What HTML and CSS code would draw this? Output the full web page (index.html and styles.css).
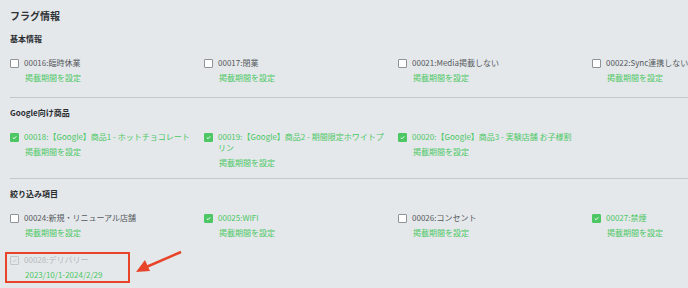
FILE: index.html
```html
<!DOCTYPE html>
<html>
  <head>
    <title>フラグ情報</title>
    <link rel="stylesheet" href="styles.css">
  </head>
  <body>
    <div class="page">
      <h1 class="title">フラグ情報</h1>

      <div class="section">
        <h2 class="section-title">基本情報</h2>
        <div class="flag-grid">
          <div class="flag">
            <span class="box"></span>
            <div class="flag-body">
              <p class="label">00016:臨時休業</p>
              <p class="period">掲載期間を設定</p>
            </div>
          </div>
          <div class="flag">
            <span class="box"></span>
            <div class="flag-body">
              <p class="label">00017:閉業</p>
              <p class="period">掲載期間を設定</p>
            </div>
          </div>
          <div class="flag">
            <span class="box"></span>
            <div class="flag-body">
              <p class="label">00021:Media掲載しない</p>
              <p class="period">掲載期間を設定</p>
            </div>
          </div>
          <div class="flag">
            <span class="box"></span>
            <div class="flag-body">
              <p class="label">00022:Sync連携しない</p>
              <p class="period">掲載期間を設定</p>
            </div>
          </div>
        </div>
      </div>

      <div class="section">
        <h2 class="section-title">Google向け商品</h2>
        <div class="flag-grid">
          <div class="flag checked">
            <span class="box"><svg viewBox="0 0 10 10"><path d="M2.6 5.2 L4.3 6.8 L7.5 3.4"/></svg></span>
            <div class="flag-body">
              <p class="label">00018:【Google】商品1 - ホットチョコレート</p>
              <p class="period">掲載期間を設定</p>
            </div>
          </div>
          <div class="flag checked">
            <span class="box"><svg viewBox="0 0 10 10"><path d="M2.6 5.2 L4.3 6.8 L7.5 3.4"/></svg></span>
            <div class="flag-body">
              <p class="label">00019:【Google】商品2 - 期間限定ホワイトプリン</p>
              <p class="period">掲載期間を設定</p>
            </div>
          </div>
          <div class="flag checked">
            <span class="box"><svg viewBox="0 0 10 10"><path d="M2.6 5.2 L4.3 6.8 L7.5 3.4"/></svg></span>
            <div class="flag-body">
              <p class="label">00020:【Google】商品3 - 実験店舗 お子様割</p>
              <p class="period">掲載期間を設定</p>
            </div>
          </div>
        </div>
      </div>

      <div class="section last">
        <h2 class="section-title">絞り込み項目</h2>
        <div class="flag-grid">
          <div class="flag">
            <span class="box"></span>
            <div class="flag-body">
              <p class="label">00024:新規・リニューアル店舗</p>
              <p class="period">掲載期間を設定</p>
            </div>
          </div>
          <div class="flag checked">
            <span class="box"><svg viewBox="0 0 10 10"><path d="M2.6 5.2 L4.3 6.8 L7.5 3.4"/></svg></span>
            <div class="flag-body">
              <p class="label">00025:WIFI</p>
              <p class="period">掲載期間を設定</p>
            </div>
          </div>
          <div class="flag">
            <span class="box"></span>
            <div class="flag-body">
              <p class="label">00026:コンセント</p>
              <p class="period">掲載期間を設定</p>
            </div>
          </div>
          <div class="flag checked">
            <span class="box"><svg viewBox="0 0 10 10"><path d="M2.6 5.2 L4.3 6.8 L7.5 3.4"/></svg></span>
            <div class="flag-body">
              <p class="label">00027:禁煙</p>
              <p class="period">掲載期間を設定</p>
            </div>
          </div>
          <div class="flag disabled marked">
            <span class="box"><svg viewBox="0 0 10 10"><path d="M2.6 5.2 L4.3 6.8 L7.5 3.4"/></svg></span>
            <div class="flag-body">
              <p class="label">00028:デリバリー</p>
              <p class="period">2023/10/1-2024/2/29</p>
            </div>
            <svg class="arrow" viewBox="0 0 50 24">
              <line x1="47" y1="1" x2="10" y2="17"/>
              <polygon points="2,21 11,9 16,20"/>
            </svg>
          </div>
        </div>
      </div>
    </div>
  </body>
</html>
```

FILE: styles.css
```css
html, body {
  margin: 0;
  height: 100%;
  overflow: hidden;
}
body {
  background-color: #e4e8eb;
  color: #333;
  font-family: "Noto Sans CJK JP", "Noto Sans", sans-serif;
}
.page {
  padding: 9px 0 0 10px;
  overflow: hidden;
  height: 279px;
}
.title {
  margin: 0;
  font-size: 10px;
  line-height: 14px;
  font-weight: bold;
  color: #2f3336;
}
.section {
  border-bottom: 1px solid #c3c8cb;
  padding-bottom: 10px;
  margin-top: 10px;
}
.section + .section {
  margin-top: 9px;
}
.section.last {
  border-bottom: none;
}
.section-title {
  margin: 0;
  font-size: 8px;
  line-height: 12px;
  font-weight: bold;
  color: #2a2d30;
}
.flag-grid {
  display: grid;
  grid-template-columns: repeat(4, 180px);
  column-gap: 14px;
  row-gap: 12px;
  margin-top: 12px;
}
.flag {
  display: flex;
  gap: 5px;
  min-height: 30px;
  position: relative;
}
.box {
  width: 7px;
  height: 7px;
  margin-top: 2px;
  flex-shrink: 0;
  background-color: white;
  border: 1px solid #8e9397;
  border-radius: 1px;
  display: flex;
}
.box svg {
  width: 100%;
  height: 100%;
  fill: none;
  stroke: white;
  stroke-width: 1.4;
}
.flag-body p {
  margin: 0;
}
.label {
  font-size: 8px;
  line-height: 11px;
  color: #55595c;
}
.period {
  margin-top: 4px !important;
  font-size: 8px;
  line-height: 11px;
  color: #4cc764;
  padding-left: 1px;
}
.checked .box {
  background-color: #4cc764;
  border-color: #4cc764;
}
.checked .label {
  color: #4cc764;
}
.disabled .box {
  background-color: transparent;
  border-color: #c2c6c9;
}
.disabled .box svg {
  stroke: #c2c6c9;
}
.disabled .label {
  color: #b6babd;
}
.marked::after {
  content: "";
  position: absolute;
  left: -5px;
  top: -2px;
  width: 121px;
  height: 27px;
  border: 2px solid #e8442a;
}
.arrow {
  position: absolute;
  left: 124px;
  top: -3px;
  width: 50px;
  height: 24px;
  overflow: visible;
}
.arrow line {
  stroke: #e8442a;
  stroke-width: 2.5;
}
.arrow polygon {
  fill: #e8442a;
}
```
